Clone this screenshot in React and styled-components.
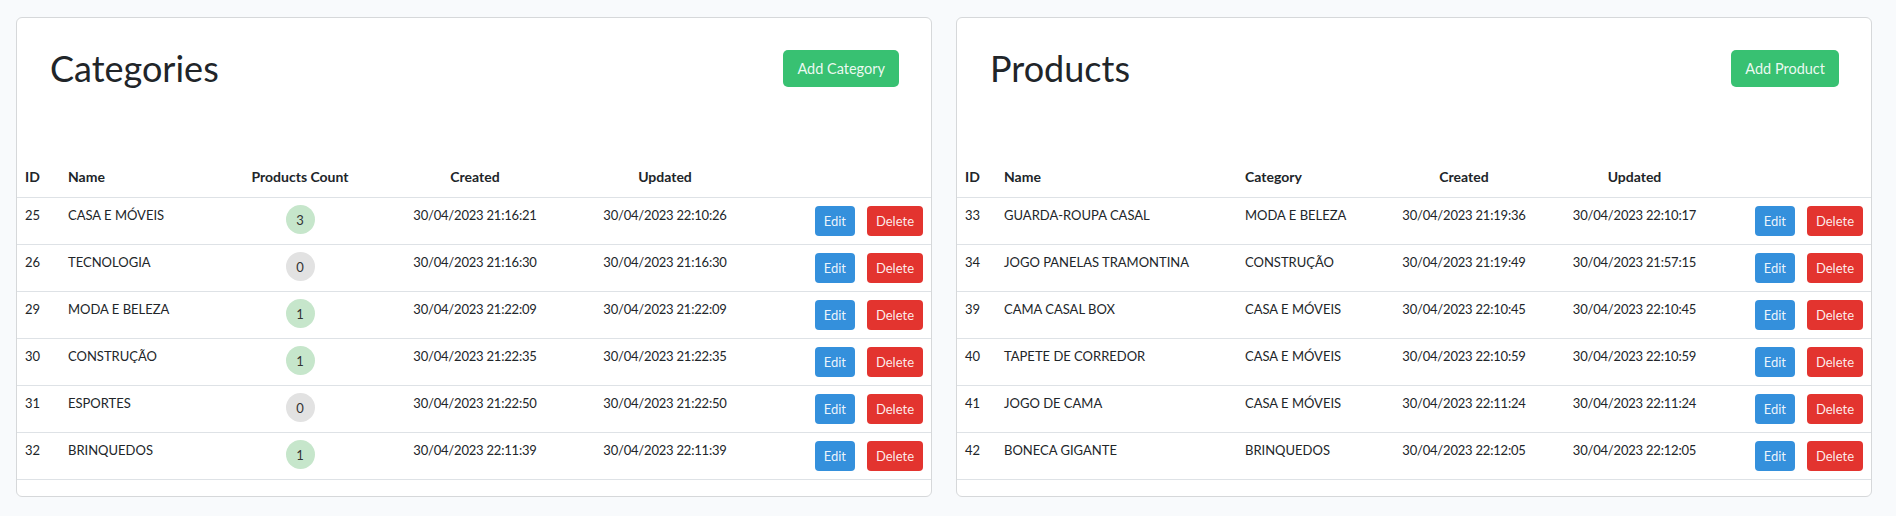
import styled, { createGlobalStyle } from 'styled-components';

const GlobalStyle = createGlobalStyle`
  html, body {
    margin: 0;
    padding: 0;
    background: #f8fafc;
    font-family: Lato, "Noto Sans", sans-serif;
    color: #212529;
  }
  * { box-sizing: border-box; }
`;

const Page = styled.div`
  display: grid;
  grid-template-columns: 916px 916px;
  gap: 24px;
  padding: 17px 24px 20px 16px;
`;

const Card = styled.section`
  background: #fff;
  border: 1px solid #d6d8da;
  border-radius: 6px;
  padding-bottom: 16px;
`;

const CardHeader = styled.div`
  display: flex;
  align-items: center;
  justify-content: space-between;
  padding: 28px 32px 70px 33px;
`;

const Title = styled.h1`
  margin: 0;
  font-size: 36px;
  font-weight: 400;
  line-height: 44px;
  color: #212529;
`;

const Button = styled.button`
  border: none;
  color: rgba(255, 255, 255, 0.92);
  font-family: inherit;
  cursor: pointer;
  background: ${(p) => p.$bg};
  height: ${(p) => (p.$small ? '30px' : '37px')};
  padding: ${(p) => (p.$small ? '0 9px' : '0 14px')};
  font-size: ${(p) => (p.$small ? '13px' : '14.5px')};
  border-radius: ${(p) => (p.$small ? '4px' : '5px')};
`;

const Table = styled.table`
  width: 100%;
  border-collapse: collapse;
  table-layout: fixed;
  font-size: 13px;
`;

const Th = styled.th`
  width: ${(p) => p.$w}px;
  text-align: ${(p) => p.$align || 'left'};
  font-weight: 700;
  font-size: 14px;
  padding: 8px 8px 12px;
  border-bottom: 1px solid #dee2e6;
  line-height: normal;
`;

const Td = styled.td`
  text-align: ${(p) => p.$align || 'left'};
  vertical-align: top;
  padding: 8px;
  padding-top: 9px;
  border-bottom: 1px solid #dee2e6;
  line-height: normal;
  height: 47px;
`;

const DateText = styled.span`
  letter-spacing: -0.2px;
`;

const Badge = styled.span`
  display: inline-flex;
  align-items: center;
  justify-content: center;
  width: 29px;
  height: 29px;
  border-radius: 50%;
  font-size: 13px;
  background: ${(p) => (p.$count > 0 ? '#c6e6cb' : '#e2e2e2')};
  color: #333;
  margin-top: -2px;
`;

const Actions = styled.div`
  display: flex;
  justify-content: flex-end;
  gap: 12px;
  margin-top: -1px;
`;

const categories = [
  [25, 'CASA E MÓVEIS', 3, '30/04/2023 21:16:21', '30/04/2023 22:10:26'],
  [26, 'TECNOLOGIA', 0, '30/04/2023 21:16:30', '30/04/2023 21:16:30'],
  [29, 'MODA E BELEZA', 1, '30/04/2023 21:22:09', '30/04/2023 21:22:09'],
  [30, 'CONSTRUÇÃO', 1, '30/04/2023 21:22:35', '30/04/2023 21:22:35'],
  [31, 'ESPORTES', 0, '30/04/2023 21:22:50', '30/04/2023 21:22:50'],
  [32, 'BRINQUEDOS', 1, '30/04/2023 22:11:39', '30/04/2023 22:11:39'],
];

const products = [
  [33, 'GUARDA-ROUPA CASAL', 'MODA E BELEZA', '30/04/2023 21:19:36', '30/04/2023 22:10:17'],
  [34, 'JOGO PANELAS TRAMONTINA', 'CONSTRUÇÃO', '30/04/2023 21:19:49', '30/04/2023 21:57:15'],
  [39, 'CAMA CASAL BOX', 'CASA E MÓVEIS', '30/04/2023 22:10:45', '30/04/2023 22:10:45'],
  [40, 'TAPETE DE CORREDOR', 'CASA E MÓVEIS', '30/04/2023 22:10:59', '30/04/2023 22:10:59'],
  [41, 'JOGO DE CAMA', 'CASA E MÓVEIS', '30/04/2023 22:11:24', '30/04/2023 22:11:24'],
  [42, 'BONECA GIGANTE', 'BRINQUEDOS', '30/04/2023 22:12:05', '30/04/2023 22:12:05'],
];

function RowActions() {
  return (
    <Actions>
      <Button $small $bg="#3490dc">Edit</Button>
      <Button $small $bg="#e3342f">Delete</Button>
    </Actions>
  );
}

export default function App() {
  return (
    <>
      <GlobalStyle />
      <Page>
        <Card>
          <CardHeader>
            <Title>Categories</Title>
            <Button $bg="#38c172">Add Category</Button>
          </CardHeader>
          <Table>
            <thead>
              <tr>
                <Th $w={43}>ID</Th>
                <Th $w={160}>Name</Th>
                <Th $w={160} $align="center">Products Count</Th>
                <Th $w={190} $align="center">Created</Th>
                <Th $w={190} $align="center">Updated</Th>
                <Th $w={171}></Th>
              </tr>
            </thead>
            <tbody>
              {categories.map(([id, name, count, created, updated]) => (
                <tr key={id}>
                  <Td>{id}</Td>
                  <Td>{name}</Td>
                  <Td $align="center"><Badge $count={count}>{count}</Badge></Td>
                  <Td $align="center"><DateText>{created}</DateText></Td>
                  <Td $align="center"><DateText>{updated}</DateText></Td>
                  <Td><RowActions /></Td>
                </tr>
              ))}
            </tbody>
          </Table>
        </Card>

        <Card>
          <CardHeader>
            <Title>Products</Title>
            <Button $bg="#38c172">Add Product</Button>
          </CardHeader>
          <Table>
            <thead>
              <tr>
                <Th $w={39}>ID</Th>
                <Th $w={241}>Name</Th>
                <Th $w={147}>Category</Th>
                <Th $w={160} $align="center">Created</Th>
                <Th $w={181} $align="center">Updated</Th>
                <Th $w={146}></Th>
              </tr>
            </thead>
            <tbody>
              {products.map(([id, name, category, created, updated]) => (
                <tr key={id}>
                  <Td>{id}</Td>
                  <Td>{name}</Td>
                  <Td>{category}</Td>
                  <Td $align="center"><DateText>{created}</DateText></Td>
                  <Td $align="center"><DateText>{updated}</DateText></Td>
                  <Td><RowActions /></Td>
                </tr>
              ))}
            </tbody>
          </Table>
        </Card>
      </Page>
    </>
  );
}
